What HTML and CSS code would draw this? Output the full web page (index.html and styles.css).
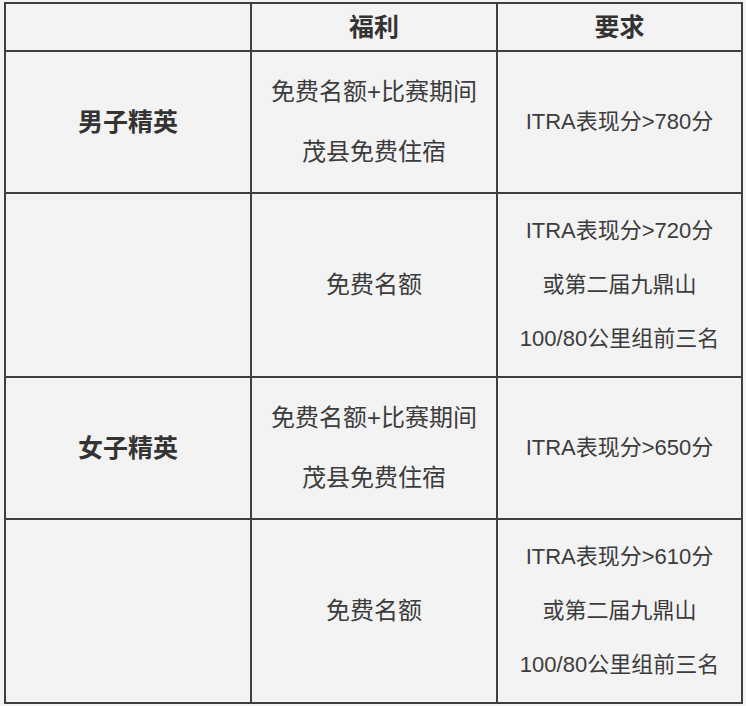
FILE: index.html
```html
<!DOCTYPE html>
<html lang="zh-CN">
<head>
<meta charset="utf-8">
<title>精英选手政策</title>
<link rel="stylesheet" href="styles.css">
</head>
<body>
<div class="page">
  <table class="elite">
    <colgroup>
      <col class="c1">
      <col class="c2">
      <col class="c3">
    </colgroup>
    <thead>
      <tr>
        <th></th>
        <th>福利</th>
        <th>要求</th>
      </tr>
    </thead>
    <tbody>
      <tr>
        <td class="label">男子精英</td>
        <td class="benefit">免费名额+比赛期间<br>茂县免费住宿</td>
        <td class="req">ITRA表现分&gt;780分</td>
      </tr>
      <tr>
        <td class="label"></td>
        <td class="benefit">免费名额</td>
        <td class="req">ITRA表现分&gt;720分<br>或第二届九鼎山<br>100/80公里组前三名</td>
      </tr>
      <tr>
        <td class="label">女子精英</td>
        <td class="benefit">免费名额+比赛期间<br>茂县免费住宿</td>
        <td class="req">ITRA表现分&gt;650分</td>
      </tr>
      <tr>
        <td class="label"></td>
        <td class="benefit">免费名额</td>
        <td class="req">ITRA表现分&gt;610分<br>或第二届九鼎山<br>100/80公里组前三名</td>
      </tr>
    </tbody>
  </table>
</div>
</body>
</html>
```

FILE: styles.css
```css
html, body {
  margin: 0;
  padding: 0;
  background: #f3f3f3;
}

.page {
  padding: 2px 0 0 4px;
}

.elite {
  border-collapse: collapse;
  table-layout: fixed;
  width: 737px;
  font-family: "Liberation Sans", "Noto Sans CJK SC", sans-serif;
  color: #3c3c3c;
  text-align: center;
}

.c1 { width: 246px; }
.c2 { width: 246px; }
.c3 { width: 245px; }

.elite th,
.elite td {
  border: 2px solid #3f3f3f;
  padding: 0;
  text-align: center;
  vertical-align: middle;
}

.elite th {
  height: 46px;
  font-size: 25px;
  font-weight: bold;
  line-height: 46px;
  color: #333333;
}

.elite td {
  padding: 10px 0 10px;
}

.label {
  font-size: 25px;
  font-weight: bold;
  color: #333333;
  line-height: 30px;
}

.benefit {
  font-size: 24px;
  line-height: 60px;
}

.req {
  font-size: 22px;
  line-height: 54px;
}
```
